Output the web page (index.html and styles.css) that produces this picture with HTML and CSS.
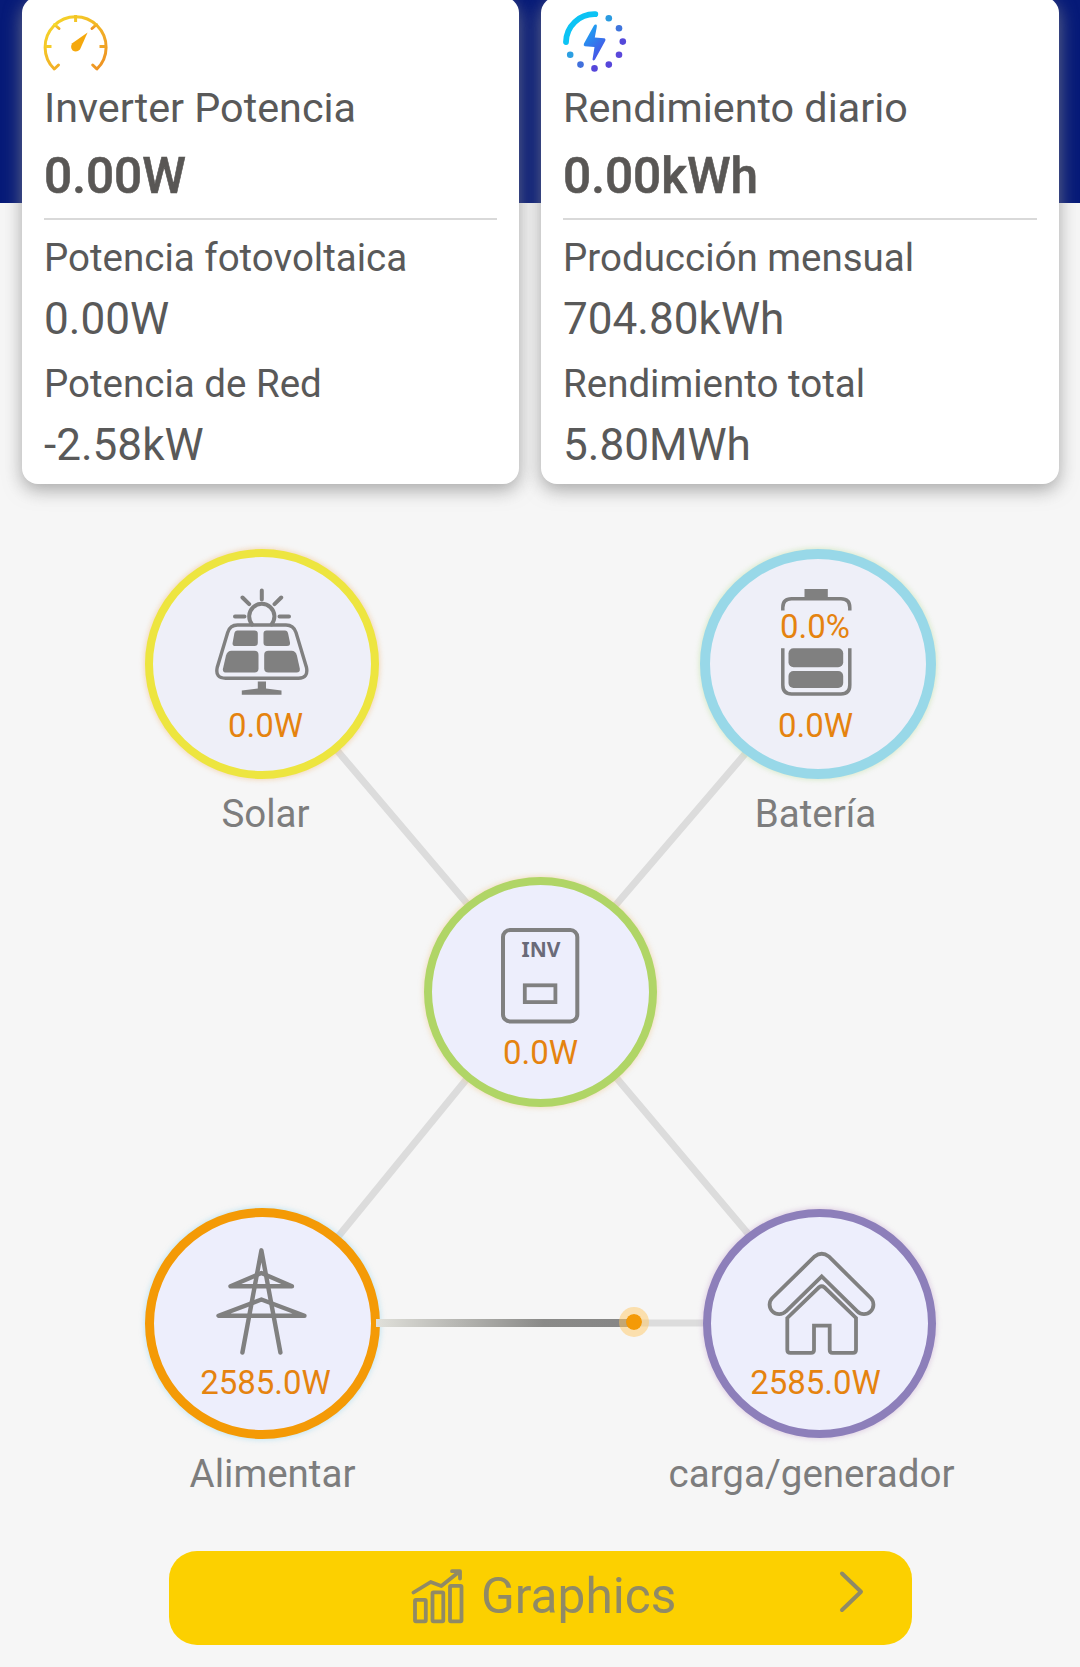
FILE: index.html
```html
<!DOCTYPE html>
<html lang="es">
<head>
  <meta charset="UTF-8">
  <meta name="viewport" content="width=device-width, initial-scale=1.0">
  <title>Inverter</title>
  <link rel="stylesheet" href="styles.css">
</head>
<body>
  <div class="summary">
    <div class="card card-power">
      <svg class="card-icon" viewBox="43 11 66 66">
        <defs>
          <linearGradient id="gauge" x1="0" y1="0" x2="1" y2="1">
            <stop offset="0" stop-color="#f6dc2a"/>
            <stop offset="1" stop-color="#ee8f22"/>
          </linearGradient>
        </defs>
        <g fill="none" stroke="url(#gauge)" stroke-width="3" stroke-linecap="round" stroke-linejoin="round">
          <path d="M58.5 65 L54.3 69 A30.5 30.5 0 1 1 96.9 69 L92.7 65"/>
          <path d="M54.5 24.5 L59 28.5 M96.5 24.5 L92 28.5"/>
        </g>
        <path d="M75.6 15 V22" stroke="#f3c524" stroke-width="3"/>
        <path d="M45 46.5 H51.5" stroke="#f5cc28" stroke-width="3"/>
        <path d="M99.5 46.5 H106" stroke="#f0a526" stroke-width="3"/>
        <path d="M87.6 32.6 L72.2 43.2 Q69.8 47.2 72.6 50.4 Q76.6 52.8 80 49.4 Z" fill="#f5a80c"/>
      </svg>
      <div class="title">Inverter Potencia</div>
      <div class="total">0.00W</div>
      <div class="divider"></div>
      <div class="label">Potencia fotovoltaica</div>
      <div class="value">0.00W</div>
      <div class="label">Potencia de Red</div>
      <div class="value">-2.58kW</div>
    </div>
    <div class="card card-yield">
      <svg class="card-icon" viewBox="562 11 66 66">
        <defs>
          <linearGradient id="bolt" x1="0" y1="0" x2="0.6" y2="1">
            <stop offset="0" stop-color="#12b4f5"/>
            <stop offset="1" stop-color="#4a4fe6"/>
          </linearGradient>
        </defs>
        <path d="M566 42 A28.4 28.4 0 0 1 595.3 14.2" fill="none" stroke="#0cc3f4" stroke-width="5.8" stroke-linecap="round"/>
        <path d="M596 24.5 Q597.3 24.6 596.6 28 L594.8 37.6 L604 38.2 Q606.3 38.6 605 41.3 L595 59.5 Q593.3 61.5 592.5 59.5 L594.5 47 L584.8 46.2 Q583 45.6 584 43.4 L593.8 25.8 Q594.8 24.2 596 24.5 Z" fill="url(#bolt)"/>
        <circle cx="608.8" cy="18.2" r="3.3" fill="#2a9be0"/>
        <circle cx="619" cy="28.2" r="3.3" fill="#3f74dc"/>
        <circle cx="622.8" cy="41.6" r="3.3" fill="#5448da"/>
        <circle cx="619" cy="54.8" r="3.3" fill="#5a48da"/>
        <circle cx="608.8" cy="64.6" r="3.3" fill="#5646da"/>
        <circle cx="594.5" cy="68.4" r="3.3" fill="#5546da"/>
        <circle cx="580.5" cy="64.6" r="3.3" fill="#4170dc"/>
        <circle cx="570.2" cy="54.8" r="3.3" fill="#2c9fe2"/>
      </svg>
      <div class="title">Rendimiento diario</div>
      <div class="total">0.00kWh</div>
      <div class="divider"></div>
      <div class="label">Producción mensual</div>
      <div class="value">704.80kWh</div>
      <div class="label">Rendimiento total</div>
      <div class="value">5.80MWh</div>
    </div>
  </div>

  <div class="flow">
    <svg class="lines" viewBox="0 484 1080 1067">
      <path d="M335 748 L470 907 M745 754 L614 907 M337 1238 L470 1075 M750 1236 L614 1075 M376 1323 H706" fill="none" stroke="#dcdcdc" stroke-width="7"/>
    </svg>

    <div class="node solar">
      <div class="ring">
        <svg class="node-icon" viewBox="207.5 588.5 110 110">
          <g fill="none" stroke="#808080" stroke-width="4" stroke-linecap="round">
            <path d="M262.3 591 V600 M243 598 L249.7 604.6 M281.7 598 L275 604.6 M235.5 617 H245 M280 617 H289.5"/>
            <path d="M252.6 625 A12.6 12.6 0 1 1 272 625"/>
          </g>
          <path d="M238 625.5 H286.5 Q294 625.5 296.5 633 L307 668 Q309 678.7 299 678.7 H226 Q215.5 678.7 217.7 668 L228.2 633 Q230.5 625.5 238 625.5 Z" fill="none" stroke="#808080" stroke-width="3.4"/>
          <g fill="#808080">
            <path d="M238 631 H255 Q258.3 631 258.3 634 V643.3 Q258.3 646.5 255 646.5 H236 Q232.4 646.5 233.2 643 L234.8 634 Q235.4 631 238 631 Z"/>
            <path d="M267 631 H285.5 Q288 631 288.6 634 L290.5 643 Q291 646.5 287.5 646.5 H267.5 Q264 646.5 264 643.3 V634 Q264 631 267 631 Z"/>
            <path d="M232 651.3 H255 Q259 651.3 259 655.5 V669 Q259 673 255 673 H227 Q222.7 673 223.5 669 L226.5 656 Q227.8 651.3 232 651.3 Z"/>
            <path d="M269 651.3 H292 Q296.2 651.3 297.4 656 L300.3 669 Q301 673 297 673 H269 Q264.7 673 264.7 669 V655.5 Q264.7 651.3 269 651.3 Z"/>
            <path d="M258.3 682 H266.5 V689 L282 691 V695.3 H242.3 V691 L258.3 689 Z"/>
          </g>
        </svg>
        <div class="watt">0.0W</div>
      </div>
      <div class="name">Solar</div>
    </div>

    <div class="node battery">
      <div class="ring">
        <svg class="node-icon" viewBox="763.5 588 110 110">
          <rect x="805" y="589" width="23.3" height="9" fill="#808080"/>
          <g fill="none" stroke="#808080" stroke-width="3.5">
            <path d="M783.3 610.5 V607.5 Q783.3 598.7 792 598.7 H841.5 Q850.3 598.7 850.3 607.5 V610.5"/>
            <path d="M783.3 648.3 V685 Q783.3 694 792 694 H841.5 Q850.3 694 850.3 685 V648.3"/>
          </g>
          <rect x="789" y="648.3" width="54.7" height="19" rx="5" fill="#808080"/>
          <rect x="789" y="671" width="54.7" height="17" rx="5" fill="#808080"/>
        </svg>
        <div class="percent">0.0%</div>
        <div class="watt">0.0W</div>
      </div>
      <div class="name">Batería</div>
    </div>

    <div class="node inverter">
      <div class="ring">
        <svg class="node-icon" viewBox="486 920.5 110 110">
          <g fill="none" stroke="#808080">
            <rect x="503" y="930.5" width="74.3" height="91.5" rx="7" stroke-width="4"/>
            <rect x="524.8" y="985.8" width="30.6" height="16.8" stroke-width="3.8"/>
          </g>
          <text class="inv-text" x="541" y="957.4" text-anchor="middle">INV</text>
        </svg>
        <div class="watt">0.0W</div>
      </div>
    </div>

    <div class="node grid">
      <div class="ring">
        <svg class="node-icon" viewBox="208 1246 110 110">
          <g fill="none" stroke="#808080" stroke-width="4.4" stroke-linecap="round" stroke-linejoin="round">
            <path d="M242.4 1352.5 L261.4 1250.3 L280.4 1352.5"/>
            <path d="M261.4 1273 L230.5 1286.3 H292 Z"/>
            <path d="M261.4 1299.5 L218.5 1315.7 H304.5 Z"/>
          </g>
        </svg>
        <div class="watt">2585.0W</div>
      </div>
      <div class="name">Alimentar</div>
    </div>

    <div class="node load">
      <div class="ring">
        <svg class="node-icon" viewBox="765 1245.5 110 110">
          <g fill="none" stroke="#808080" stroke-width="3.8">
            <path d="M772.3 1297.5 L814.6 1256 Q821.7 1250.4 828.8 1256 L870.7 1297.5 A9.3 9.3 0 0 1 857.3 1310.8 L821.7 1276 L786 1310.8 A9.3 9.3 0 0 1 772.3 1297.5 Z"/>
            <path d="M787.3 1317.5 L819 1286.8 Q821.7 1284.8 824.4 1286.8 L856 1317.5 V1349.3 Q856 1352.4 853 1352.4 H832.5 Q829.7 1352.4 829.7 1349.5 V1325.2 H814 V1349.5 Q814 1352.4 811 1352.4 H790.3 Q787.3 1352.4 787.3 1349.3 Z"/>
          </g>
        </svg>
        <div class="watt">2585.0W</div>
      </div>
      <div class="name">carga/generador</div>
    </div>

    <!-- energy moving from the grid to the load -->
    <div class="stream"><span class="dot"></span></div>
  </div>

  <div class="button">
    <svg class="chart-icon" viewBox="411 1567 54 57">
      <g fill="none" stroke="#908a66" stroke-width="3.8" stroke-linejoin="round">
        <rect x="415" y="1598.8" width="10.8" height="21.5" rx="1"/>
        <rect x="432.5" y="1591.3" width="10.8" height="29" rx="1"/>
        <rect x="450" y="1584.8" width="11.5" height="35.5" rx="1"/>
        <path d="M413.5 1591.5 L430.7 1581 L441.3 1585 L459.5 1570.6 M452 1570.2 H460 V1577.5" stroke-linecap="round"/>
      </g>
    </svg>
    <span class="button-text">Graphics</span>
    <svg class="chevron" viewBox="838 1569 28 46">
      <path d="M842 1573.5 L861 1591.7 L842 1610" fill="none" stroke="#908a66" stroke-width="4" stroke-linecap="round" stroke-linejoin="round"/>
    </svg>
  </div>
</body>
</html>
```
FILE: styles.css
```css
* {
  margin: 0;
  padding: 0;
  box-sizing: border-box;
}
body {
  width: 1080px;
  height: 1667px;
  overflow: hidden;
  font-family: Roboto, sans-serif;
  background-color: #f6f6f6;
}
.summary {
  display: flex;
  align-items: flex-start;
  gap: 22px;
  height: 484px;
  padding: 0 21px 0 22px;
  background: linear-gradient(#061a78 203px, transparent 203px);
}
.card {
  display: flex;
  flex-direction: column;
  height: 487px;
  margin-top: -3px;
  padding: 14px 22px 0;
  background: white;
  border-radius: 16px;
  box-shadow: 0 6px 18px rgba(140, 140, 140, 0.75);
  color: #595959;
}
.card-power {
  width: 497px;
}
.card-yield {
  width: 518px;
}
.card-icon {
  width: 66px;
  height: 66px;
  margin-left: -1px;
}
.title {
  margin-top: 7px;
  font-size: 41.3px;
  line-height: 48px;
  white-space: nowrap;
}
.total {
  margin-top: 16px;
  font-size: 49.5px;
  font-weight: 500;
  line-height: 56px;
  color: #595755;
  -webkit-text-stroke: 0.6px #595755;
}
.divider {
  height: 2px;
  margin-top: 14px;
  background: #d9d9d9;
}
.label {
  margin-top: 16px;
  font-size: 38.5px;
  line-height: 46px;
}
.divider + .label {
  margin-top: 15px;
}
.value {
  margin-top: 12px;
  font-size: 44.1px;
  line-height: 52px;
}
.flow {
  position: relative;
  height: 1067px;
}
.lines {
  display: block;
  width: 1080px;
  height: 1067px;
}
/* node positions on the diagram */
.node {
  position: absolute;
  display: flex;
  flex-direction: column;
  align-items: center;
  width: 233px;
}
.solar {
  left: 145px;
  top: 65px;
  width: 234px;
}
.battery {
  left: 700px;
  top: 65px;
  width: 236px;
}
.inverter {
  left: 424px;
  top: 393px;
}
.grid {
  left: 145px;
  top: 724px;
  width: 235px;
}
.load {
  left: 703px;
  top: 725px;
}
.ring {
  position: relative;
  display: flex;
  flex-direction: column;
  align-items: center;
  width: 100%;
  height: 229px;
  padding-top: 31px;
  border: 8px solid;
  border-radius: 50%;
  background: #edeefc;
}
.solar .ring {
  height: 230px;
  border-color: #ede53f;
  background: #eeeff8;
  box-shadow: 0 0 5px 1px rgba(240, 180, 110, 0.45);
}
.battery .ring {
  height: 230px;
  padding-top: 29px;
  border: 10px solid #98d8e8;
  background: #eeeff8;
  box-shadow: 0 0 5px 1px rgba(180, 220, 150, 0.45);
}
.inverter .ring {
  height: 230px;
  padding-top: 35px;
  border-width: 8.5px;
  border-color: #b0d566;
  box-shadow: 0 0 5px 1px rgba(240, 200, 140, 0.5);
}
.grid .ring {
  height: 231px;
  padding-top: 29px;
  border-width: 9px;
  border-color: #f49a06;
  box-shadow: 0 0 5px 1px rgba(150, 215, 240, 0.5);
}
.load .ring {
  padding-top: 29px;
  border-color: #8d7fba;
  box-shadow: 0 0 5px 1px rgba(190, 150, 200, 0.4);
}
.node-icon {
  width: 110px;
  height: 110px;
  overflow: visible;
}
.inv-text {
  font-family: 'Noto Sans', sans-serif;
  font-size: 21px;
  font-weight: 700;
  fill: #6a6a78;
}
.watt {
  margin-top: 9px;
  font-size: 33px;
  line-height: 38px;
  color: #e5830f;
}
.solar .watt {
  margin-left: 7px;
}
.grid .watt {
  margin-left: 6px;
}
.battery .watt {
  margin-right: 5px;
}
.load .watt {
  margin-right: 8px;
}
.inverter .watt {
  margin-top: 4px;
}
.grid .watt, .load .watt {
  margin-top: 8px;
}
.percent {
  position: absolute;
  left: 70px;
  top: 49px;
  font-size: 33px;
  line-height: 38px;
  color: #e5830f;
}
.name {
  margin-top: 13px;
  font-size: 38.5px;
  line-height: 44px;
  white-space: nowrap;
  color: #7d7d7d;
}
.solar .name {
  margin-left: 7px;
}
.battery .name {
  margin-right: 5px;
}
.grid .name {
  margin-left: 20px;
}
.load .name {
  margin-top: 14px;
  margin-right: 16px;
}
.stream {
  position: absolute;
  left: 376px;
  top: 835px;
  width: 258px;
  height: 8px;
  background: linear-gradient(90deg, #e0e0da, #8a8a88 65%, #868686);
}
.dot {
  position: absolute;
  right: -15px;
  top: -12px;
  width: 30px;
  height: 30px;
  border: 7px solid rgba(255, 200, 100, 0.5);
  border-radius: 50%;
  background: #f49a06;
  background-clip: padding-box;
}
.button {
  display: flex;
  align-items: center;
  width: 743px;
  height: 94px;
  margin-left: 169px;
  padding: 0 46px 0 242px;
  border-radius: 28px;
  background: #fcd000;
}
.chart-icon {
  width: 54px;
  height: 57px;
  margin-bottom: 4px;
}
.button-text {
  margin: 0 auto 4px 16px;
  font-size: 49.6px;
  line-height: 58px;
  color: #908a66;
}
.chevron {
  width: 28px;
  height: 46px;
  margin-bottom: 12px;
}
```
